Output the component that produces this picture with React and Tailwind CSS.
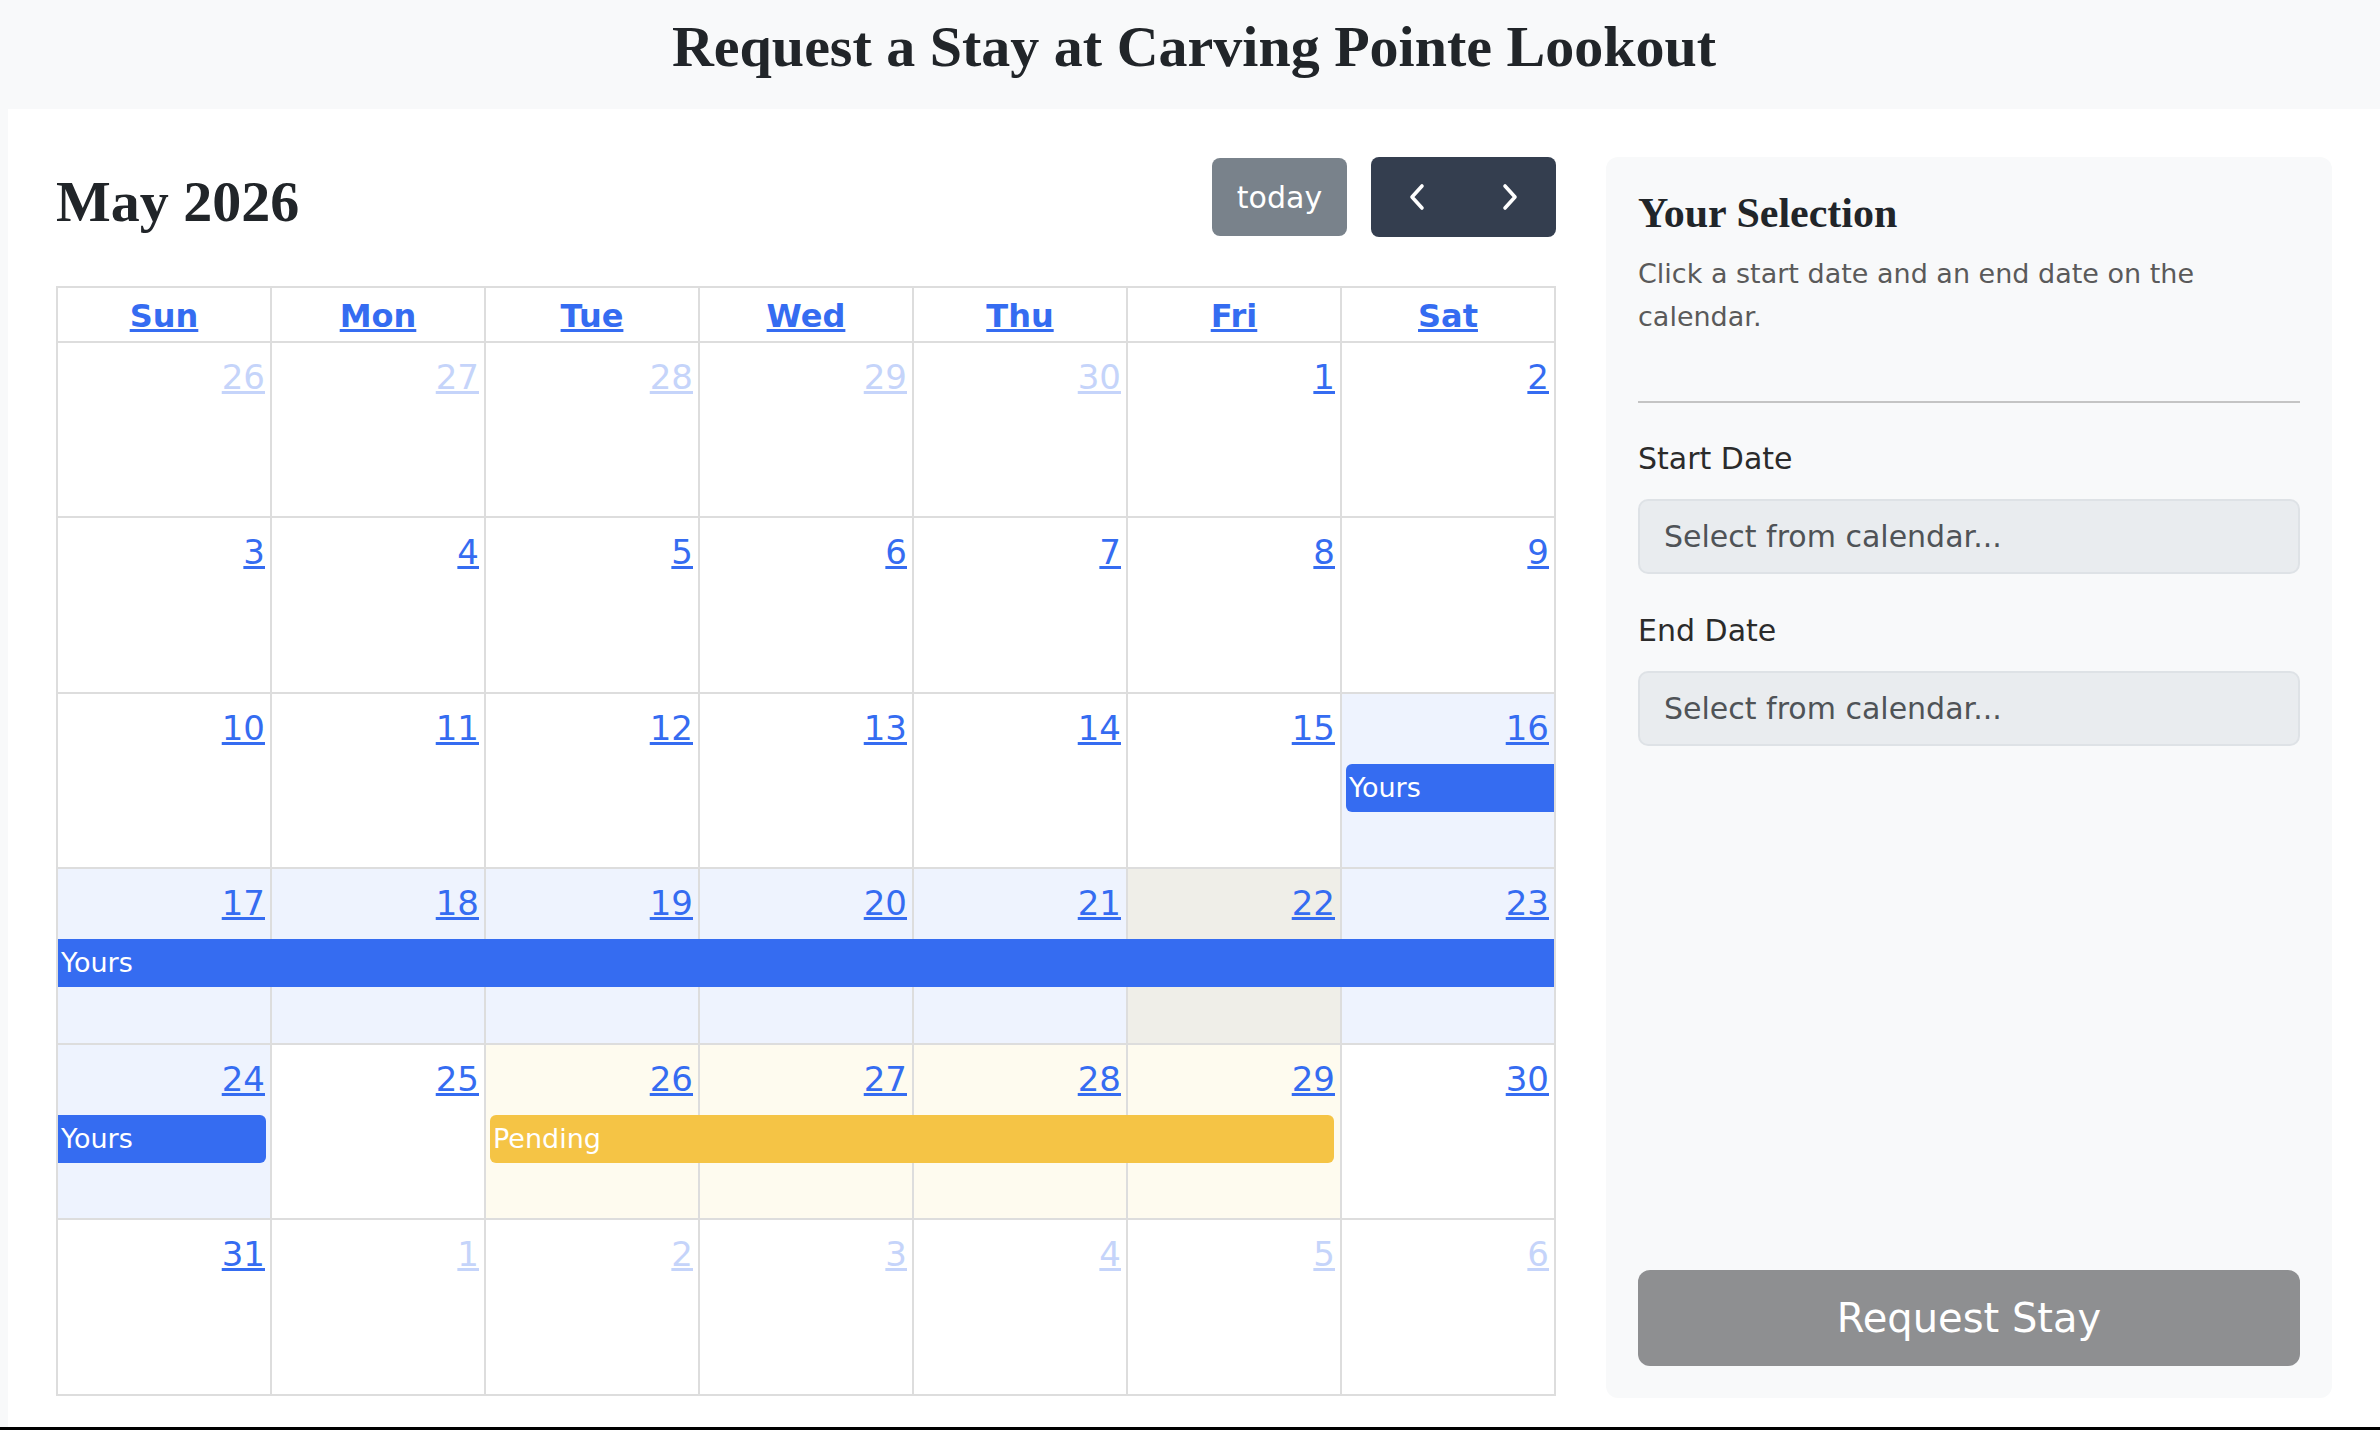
import React from "react";

const colStart = [
  "col-start-1",
  "col-start-2",
  "col-start-3",
  "col-start-4",
  "col-start-5",
  "col-start-6",
  "col-start-7",
];

const cellBg = {
  blue: "bg-[#eef3fe]",
  today: "bg-[#efeee8]",
  pending: "bg-[#fefbef]",
};

const weeks = [
  {
    h: "h-[175px]",
    days: [
      { d: 26, o: true },
      { d: 27, o: true },
      { d: 28, o: true },
      { d: 29, o: true },
      { d: 30, o: true },
      { d: 1 },
      { d: 2 },
    ],
    events: [],
  },
  {
    h: "h-[176px]",
    days: [3, 4, 5, 6, 7, 8, 9].map((d) => ({ d })),
    events: [],
  },
  {
    h: "h-[175px]",
    days: [10, 11, 12, 13, 14, 15].map((d) => ({ d })).concat([{ d: 16, bg: "blue" }]),
    events: [
      {
        label: "Yours",
        cls: "col-start-7 col-span-1 ml-[4px] mr-[2px] rounded-l-[6px] bg-[#356cf1]",
      },
    ],
  },
  {
    h: "h-[176px]",
    days: [
      { d: 17, bg: "blue" },
      { d: 18, bg: "blue" },
      { d: 19, bg: "blue" },
      { d: 20, bg: "blue" },
      { d: 21, bg: "blue" },
      { d: 22, bg: "today" },
      { d: 23, bg: "blue" },
    ],
    events: [
      {
        label: "Yours",
        cls: "col-start-1 col-span-7 mr-[2px] bg-[#356cf1]",
      },
    ],
  },
  {
    h: "h-[175px]",
    days: [
      { d: 24, bg: "blue" },
      { d: 25 },
      { d: 26, bg: "pending" },
      { d: 27, bg: "pending" },
      { d: 28, bg: "pending" },
      { d: 29, bg: "pending" },
      { d: 30 },
    ],
    events: [
      {
        label: "Yours",
        cls: "col-start-1 col-span-1 mr-[6px] rounded-r-[6px] bg-[#356cf1]",
      },
      {
        label: "Pending",
        cls: "col-start-3 col-span-4 ml-[4px] mr-[8px] rounded-[6px] bg-[#f5c445]",
      },
    ],
  },
  {
    h: "h-[176px]",
    days: [{ d: 31 }].concat([1, 2, 3, 4, 5, 6].map((d) => ({ d, o: true }))),
    events: [],
  },
];

const dayNames = ["Sun", "Mon", "Tue", "Wed", "Thu", "Fri", "Sat"];

const Chevron = ({ dir }) => (
  <svg width="18" height="28" viewBox="0 0 18 28" fill="none">
    <path
      d={dir === "left" ? "M14 3 L4 14 L14 25" : "M4 3 L14 14 L4 25"}
      stroke="white"
      strokeWidth="3.6"
      strokeLinecap="round"
      strokeLinejoin="round"
    />
  </svg>
);

const Calendar = () => {
  return (
    <div className="w-[1500px] flex flex-col">
      <div className="flex justify-between items-start h-[80px]">
        <h2 className="mt-[13px] text-[58px] leading-[64px] font-bold text-[#212529] font-['Liberation_Serif',serif]">
          May 2026
        </h2>
        <div className="flex items-center gap-[24px] h-[80px]">
          <div className="w-[135px] h-[78px] rounded-[8px] bg-[#79828b] text-white text-[30px] flex items-center justify-center">
            today
          </div>
          <div className="flex w-[185px] h-[80px] rounded-[8px] bg-[#343e4f]">
            <div className="flex-1 flex items-center justify-center">
              <Chevron dir="left" />
            </div>
            <div className="flex-1 flex items-center justify-center">
              <Chevron dir="right" />
            </div>
          </div>
        </div>
      </div>

      <div className="mt-[49px] border-l-2 border-t-2 border-[#dddddd]">
        <div className="grid grid-cols-7 h-[55px] border-b-2 border-[#dddddd]">
          {dayNames.map((n) => (
            <div
              key={n}
              className="border-r-2 border-[#dddddd] text-center pt-[4px] text-[32px] font-bold text-[#356cf1]"
            >
              <span className="underline decoration-[3px] underline-offset-[2px]">{n}</span>
            </div>
          ))}
        </div>

        {weeks.map((w, wi) => (
          <div
            key={wi}
            className={`grid grid-cols-7 grid-rows-[70px_48px_1fr] border-b-2 border-[#dddddd] ${w.h}`}
          >
            {w.days.map((day, i) => (
              <div
                key={i}
                className={`${colStart[i]} row-start-1 row-end-4 border-r-2 border-[#dddddd] ${
                  day.bg ? cellBg[day.bg] : "bg-white"
                } flex justify-end items-start pt-[9px] pr-[5px]`}
              >
                <span
                  className={`text-[34px] underline decoration-[3px] underline-offset-[2px] ${
                    day.o ? "text-[#c5d4fa]" : "text-[#356cf1]"
                  }`}
                >
                  {day.d}
                </span>
              </div>
            ))}
            {w.events.map((e, ei) => (
              <div
                key={ei}
                className={`row-start-2 row-span-1 relative z-10 flex items-center pl-[3px] text-white text-[27px] ${e.cls}`}
              >
                {e.label}
              </div>
            ))}
          </div>
        ))}
      </div>
    </div>
  );
};

const SelectionPanel = () => {
  return (
    <div className="w-[726px] h-[1241px] ml-[50px] rounded-[12px] bg-[#f8f9fa] p-[32px] flex flex-col">
      <h3 className="text-[42px] leading-[49px] font-bold text-[#212529] font-['Liberation_Serif',serif]">
        Your Selection
      </h3>
      <p className="mt-[14px] text-[27px] leading-[43px] text-[#5a5a5a]">
        Click a start date and an end date on the calendar.
      </p>
      <div className="mt-[63px] h-[2px] bg-[#c4c4c4]" />

      <label className="mt-[35px] text-[30px] leading-[42px] text-[#2b2b2b]">Start Date</label>
      <div className="mt-[19px] h-[75px] rounded-[10px] border-2 border-[#dee2e6] bg-[#e9ecef] flex items-center px-[24px] text-[30px] text-[#4f5357]">
        Select from calendar...
      </div>

      <label className="mt-[36px] text-[30px] leading-[42px] text-[#2b2b2b]">End Date</label>
      <div className="mt-[19px] h-[75px] rounded-[10px] border-2 border-[#dee2e6] bg-[#e9ecef] flex items-center px-[24px] text-[30px] text-[#4f5357]">
        Select from calendar...
      </div>

      <div className="mt-auto h-[96px] rounded-[12px] bg-[#8e8f91] flex items-center justify-center text-white text-[40px]">
        Request Stay
      </div>
    </div>
  );
};

export default function App() {
  return (
    <div className="h-[1430px] w-[2380px] flex flex-col bg-[#f8f9fa] font-['DejaVu_Sans',sans-serif] overflow-hidden">
      <div className="flex-1 flex flex-col pl-[8px]">
        <div className="h-[109px] bg-[#f8f9fa] pt-[15px] text-center">
          <h1 className="text-[58px] leading-[64px] font-bold text-[#212529] font-['Liberation_Serif',serif]">
            Request a Stay at Carving Pointe Lookout
          </h1>
        </div>
        <div className="flex-1 bg-white flex items-start pt-[48px] px-[48px]">
          <Calendar />
          <SelectionPanel />
        </div>
      </div>
      <div className="h-[3px] bg-black" />
    </div>
  );
}
